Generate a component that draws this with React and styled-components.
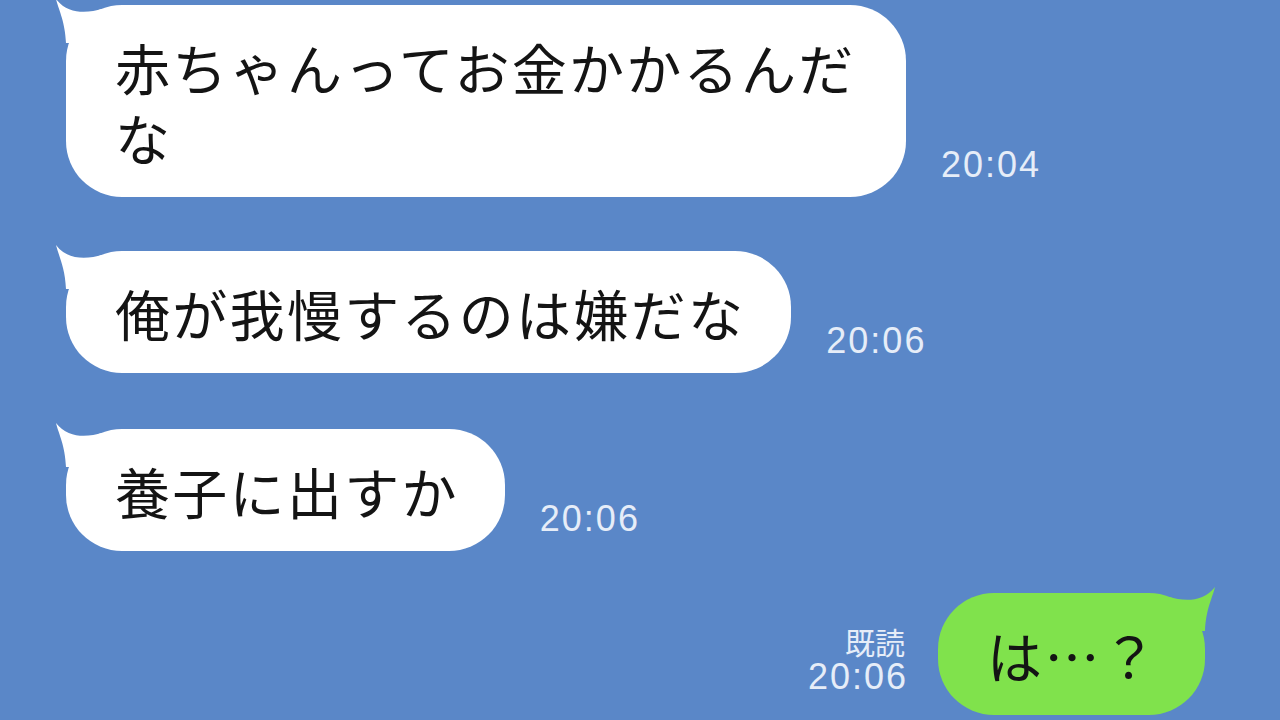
import styled, { createGlobalStyle } from "styled-components";

const messages = [
  { id: 1, side: "in", text: "赤ちゃんってお金かかるんだな", time: "20:04", space: 0 },
  { id: 2, side: "in", text: "俺が我慢するのは嫌だな", time: "20:06", space: 54 },
  { id: 3, side: "in", text: "養子に出すか", time: "20:06", space: 56 },
  { id: 4, side: "out", text: "は…？", time: "20:06", read: true, space: 42 },
];

const Tail = ({ flip, color }) => (
  <TailSvg $flip={flip} width="64" height="48" viewBox="0 0 64 48">
    <path
      d="M2 2 C5 14 11 24 12 46 L48 46 L48 12 C34 16 14 18 2 2 Z"
      fill={color}
    />
  </TailSvg>
);

const App = () => {
  return (
    <>
      <GlobalStyle />
      <Page>
        {messages.map((m) =>
          m.side === "in" ? (
            <Row key={m.id} $space={m.space}>
              <Bubble>
                <Tail color="#ffffff" />
                {m.text}
              </Bubble>
              <Time>{m.time}</Time>
            </Row>
          ) : (
            <Row key={m.id} $space={m.space} $out>
              <ReadInfo>
                <ReadLabel>既読</ReadLabel>
                <ReadTime>{m.time}</ReadTime>
              </ReadInfo>
              <Bubble $out>
                <Tail flip color="#80e24c" />
                {m.text}
              </Bubble>
            </Row>
          )
        )}
      </Page>
    </>
  );
};

export default App;

const GlobalStyle = createGlobalStyle`
  html, body {
    margin: 0;
    padding: 0;
    background: #5a87c8;
  }
`;

const Page = styled.div`
  width: 1280px;
  height: 720px;
  box-sizing: border-box;
  padding: 5px 75px 0 66px;
  background: #5a87c8;
  display: flex;
  flex-direction: column;
  overflow: hidden;
  font-family: "Noto Sans CJK JP", "Noto Sans", sans-serif;
`;

const Row = styled.div`
  display: flex;
  align-items: flex-end;
  justify-content: ${(p) => (p.$out ? "flex-end" : "flex-start")};
  gap: ${(p) => (p.$out ? "30px" : "35px")};
  margin-top: ${(p) => p.$space}px;
`;

const Bubble = styled.div`
  position: relative;
  box-sizing: border-box;
  max-width: 840px;
  padding: 26px 46px 26px 49px;
  border-radius: 56px;
  background: ${(p) => (p.$out ? "#80e24c" : "#ffffff")};
  color: #141414;
  font-size: 55px;
  line-height: 70px;
  letter-spacing: 2.3px;
  font-weight: 400;
`;

const TailSvg = styled.svg`
  position: absolute;
  top: -8px;
  ${(p) => (p.$flip ? "right: -12px; transform: scaleX(-1);" : "left: -12px;")}
`;

const Time = styled.span`
  font-family: "Liberation Sans", Arial, sans-serif;
  font-size: 36px;
  line-height: 36px;
  letter-spacing: 2px;
  color: #e6edf8;
  margin-bottom: 14px;
`;

const ReadInfo = styled.div`
  display: flex;
  flex-direction: column;
  align-items: flex-end;
  gap: 3px;
  margin-bottom: 20px;
  color: #e6edf8;
`;

const ReadLabel = styled.span`
  font-family: "Noto Sans CJK JP", sans-serif;
  font-size: 30px;
  line-height: 30px;
  margin-right: 3px;
`;

const ReadTime = styled.span`
  font-family: "Liberation Sans", Arial, sans-serif;
  font-size: 36px;
  line-height: 36px;
  letter-spacing: 2px;
`;
